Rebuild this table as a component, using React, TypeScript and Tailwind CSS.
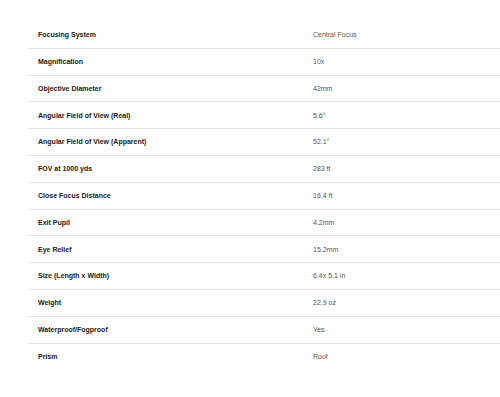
const specs: [string, string][] = [
  ["Focusing System", "Central Focus"],
  ["Magnification", "10x"],
  ["Objective Diameter", "42mm"],
  ["Angular Field of View (Real)", "5.6°"],
  ["Angular Field of View (Apparent)", "52.1°"],
  ["FOV at 1000 yds", "283 ft"],
  ["Close Focus Distance", "16.4 ft"],
  ["Exit Pupil", "4.2mm"],
  ["Eye Relief", "15.2mm"],
  ["Size (Length x Width)", "6.4x 5.1 in"],
  ["Weight", "22.9 oz"],
  ["Waterproof/Fogproof", "Yes"],
  ["Prism", "Roof"],
];

export default function App() {
  return (
    <div className="w-[500px] h-[397px] bg-white pt-[22px] pl-[28px] font-['Liberation_Sans',Arial,sans-serif] overflow-hidden">
      {specs.map(([label, value], i) => (
        <div
          key={label}
          className={`flex items-center h-[26.8px] pt-[1px] ${i < specs.length - 1 ? "border-b border-[#e6e6e6]" : ""}`}
        >
          <div className="w-[285px] pl-[10px] text-[7px] font-bold text-[#1a1a1a]">{label}</div>
          <div className="text-[7px] text-[#555]">{value}</div>
        </div>
      ))}
    </div>
  );
}
